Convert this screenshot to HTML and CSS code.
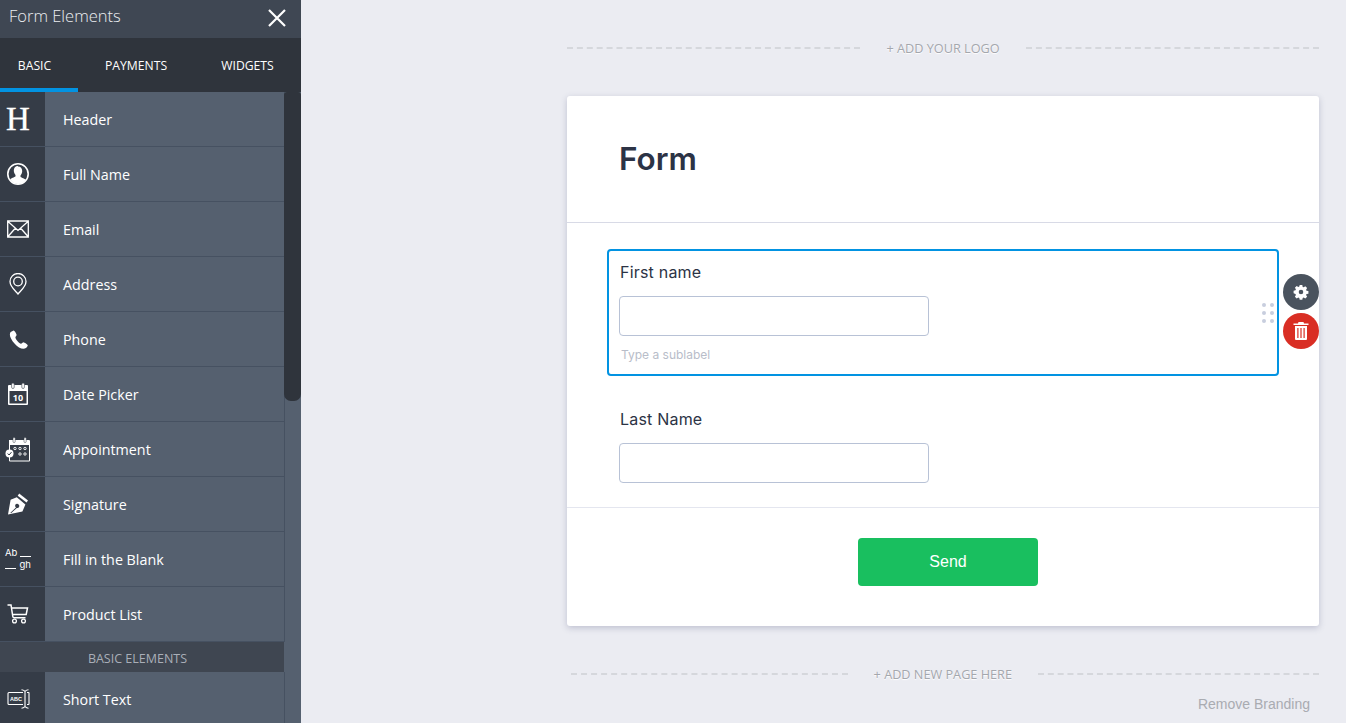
FILE: index.html
```html
<!DOCTYPE html>
<html lang="en">
<head>
    <meta charset="UTF-8">
    <title>Form Builder</title>
    <link rel="stylesheet" href="styles.css">
</head>
<body>
    <aside class="sidebar">
        <div class="sidebar-head">
            <span class="sidebar-title">Form Elements</span>
            <svg class="close-icon" width="20" height="20" viewBox="0 0 20 20"><path d="M2 2 L18 18 M18 2 L2 18" stroke="#fff" stroke-width="2.2" fill="none"/></svg>
        </div>
        <div class="tabs">
            <div class="tab tab-active">BASIC</div>
            <div class="tab tab-mid">PAYMENTS</div>
            <div class="tab tab-last">WIDGETS</div>
        </div>
        <div class="element-list">
            <div class="scroll-thumb"></div>
            <div class="element">
                <div class="element-icon"><span class="h-glyph">H</span></div>
                <div class="element-name">Header</div>
            </div>
            <div class="element">
                <div class="element-icon">
                    <svg width="24" height="24" viewBox="0 0 24 24"><circle cx="12" cy="12" r="10.200" fill="none" stroke="#fff" stroke-width="1.600"/><path d="M12 4.500c2.700 0 4.200 2 4.200 4.500 0 1.800-.8 3.400-1.700 4.400v1.300c0 .6 3.400 1.600 5.400 3A10 10 0 0 1 12 22a10 10 0 0 1-7.900-4.800c2-1.400 5.400-2.400 5.400-3v-1.300c-.9-1-1.700-2.600-1.700-4.400 0-2.500 1.500-4.500 4.200-4.500z" fill="#fff"/></svg>
                </div>
                <div class="element-name">Full Name</div>
            </div>
            <div class="element">
                <div class="element-icon">
                    <svg width="22" height="18" viewBox="0 0 22 18"><path d="M.7 1h20.600v16H.7z M1 1.500l10 9 10-9 M1 16.500l7.500-8.500 M21 16.500l-7.500-8.500" fill="none" stroke="#fff" stroke-width="1.300"/></svg>
                </div>
                <div class="element-name">Email</div>
            </div>
            <div class="element">
                <div class="element-icon">
                    <svg width="18" height="22" viewBox="0 0 18 22"><path d="M9 21C6 17.500 1 13.500 1 8.500a8 8 0 0 1 16 0C17 13.500 12 17.500 9 21z" fill="none" stroke="#fff" stroke-width="1.300"/><circle cx="9" cy="8.500" r="4.300" fill="none" stroke="#fff" stroke-width="1.300"/></svg>
                </div>
                <div class="element-name">Address</div>
            </div>
            <div class="element">
                <div class="element-icon">
                    <svg width="19" height="19" viewBox="0 0 19 19"><path d="M4.600.6 1.700 1.900C.6 3 .5 5.600 2 8.600c1.800 3.600 4.900 7 8 8.900 2.500 1.400 5.300 1.700 6.900.6 1-.7 1.700-2 1.900-2.900-.2-.8-3.300-2.800-4.300-3-.8 0-1.800 1.400-2.500 1.500-1.500.1-5.500-4.600-5.600-6.300 0-.8 1.200-1.500 1.200-2.300C7.600 4.100 5.800.9 4.600.6z" fill="#fff"/></svg>
                </div>
                <div class="element-name">Phone</div>
            </div>
            <div class="element">
                <div class="element-icon">
                    <svg width="22" height="22" viewBox="0 0 22 22"><path d="M2 2h18a1 1 0 0 1 1 1v18a1 1 0 0 1-1 1H2a1 1 0 0 1-1-1V3a1 1 0 0 1 1-1z" fill="#fff"/><rect x="2.500" y="8" width="17" height="12.500" fill="#353c47"/><rect x="4.600" y="0" width="2.600" height="5.500" rx="1.300" fill="#fff" stroke="#353c47" stroke-width=".6"/><rect x="14.800" y="0" width="2.600" height="5.500" rx="1.300" fill="#fff" stroke="#353c47" stroke-width=".6"/><text x="11" y="18.300" class="date-num">10</text></svg>
                </div>
                <div class="element-name">Date Picker</div>
            </div>
            <div class="element">
                <div class="element-icon">
                    <svg width="26" height="25" viewBox="0 0 26 25"><path d="M4 3h20a1 1 0 0 1 1 1v19.500a1 1 0 0 1-1 1H5a1 1 0 0 1-1-1z" fill="#fff"/><rect x="5" y="8" width="19" height="15.500" fill="#353c47"/><rect x="8" y="0.500" width="2.200" height="5" rx="1" fill="#fff" stroke="#353c47" stroke-width=".5"/><rect x="19" y="0.500" width="2.200" height="5" rx="1" fill="#fff" stroke="#353c47" stroke-width=".5"/><g fill="none" stroke="#fff" stroke-width=".9"><circle cx="10" cy="11.500" r="1.200"/><circle cx="15" cy="11.500" r="1.200"/><circle cx="20" cy="11.500" r="1.200"/><circle cx="15" cy="17" r="1.200"/><circle cx="20" cy="17" r="1.200"/></g><circle cx="4.500" cy="16.500" r="4" fill="#fff"/><path d="M2.700 16.500l1.400 1.500 2.400-2.900" stroke="#353c47" stroke-width="1" fill="none"/></svg>
                </div>
                <div class="element-name">Appointment</div>
            </div>
            <div class="element">
                <div class="element-icon">
                    <svg width="22" height="22" viewBox="0 0 22 22"><path d="M12.200.6l8.800 6.800-1.500 2.100-8.800-6.800z" fill="#fff"/><path fill-rule="evenodd" d="M9.800 4.200 3.600 6.800 1 21.400 15.400 18.600l3-7zM9 11a2.200 2.200 0 1 1 .8 4.100L4 20.300l-.6-.6L9 14.500A2.200 2.200 0 0 1 9 11z" fill="#fff"/></svg>
                </div>
                <div class="element-name">Signature</div>
            </div>
            <div class="element">
                <div class="element-icon">
                    <div class="fill-blank">
                        <div class="fill-row"><span>Ab</span><i></i></div>
                        <div class="fill-row"><i></i><span>gh</span></div>
                    </div>
                </div>
                <div class="element-name">Fill in the Blank</div>
            </div>
            <div class="element">
                <div class="element-icon">
                    <svg width="22" height="20" viewBox="0 0 22 20"><path d="M.5 1H4l1.800 11.500a1.500 1.500 0 0 0 1.500 1.300h11.200 M4.500 4H20.500l-1.300 6.500H5.500" fill="none" stroke="#fff" stroke-width="1.500"/><circle cx="7.500" cy="17" r="1.900" fill="none" stroke="#fff" stroke-width="1.300"/><circle cx="16.500" cy="17" r="1.900" fill="none" stroke="#fff" stroke-width="1.300"/></svg>
                </div>
                <div class="element-name">Product List</div>
            </div>
            <div class="element-group">BASIC ELEMENTS</div>
            <div class="element">
                <div class="element-icon">
                    <svg width="23" height="20" viewBox="0 0 23 20"><path d="M16 3.500H2a1 1 0 0 0-1 1v10a1 1 0 0 0 1 1h14 M20 3.500h1.500a.5.500 0 0 1 .5.500v11a.5.500 0 0 1-.5.500H20" fill="none" stroke="#fff" stroke-width="1.100"/><path d="M14.500.8c1.500 0 2.500.6 3.500 1.500 1-.9 2-1.500 3.500-1.500 M18 2.300v15.400 M14.500 19.200c1.500 0 2.500-.6 3.500-1.500 1 .9 2 1.500 3.500 1.500" fill="none" stroke="#fff" stroke-width="1.100"/><text x="9" y="11.700" class="abc-text">ABC</text></svg>
                </div>
                <div class="element-name">Short Text</div>
            </div>
        </div>
    </aside>

    <main class="canvas">
        <div class="add-row logo-row">
            <span class="dash"></span>
            <span class="add-text">+ ADD YOUR LOGO</span>
            <span class="dash"></span>
        </div>

        <div class="form-card">
            <div class="form-head">
                <h1>Form</h1>
            </div>
            <div class="form-body">
                <div class="field field-selected">
                    <label>First name</label>
                    <div class="text-input"></div>
                    <div class="sublabel">Type a sublabel</div>
                    <div class="drag-dots">
                        <span></span><span></span><span></span><span></span><span></span><span></span>
                    </div>
                    <div class="field-tools">
                        <div class="tool tool-gear">
                            <svg width="16" height="16" viewBox="0 0 16 16"><path fill="#fff" fill-rule="evenodd" d="M6.700 1h2.600l.4 1.900 1 .4 1.600-1 1.800 1.800-1 1.600.4 1 1.900.4v2.600l-1.900.4-.4 1 1 1.600-1.800 1.800-1.600-1-1 .4-.4 1.900H6.700l-.4-1.900-1-.4-1.600 1-1.800-1.800 1-1.600-.4-1L.6 9.300V6.700l1.900-.4.4-1-1-1.600 1.800-1.800 1.600 1 1-.4zM8 5.700a2.300 2.300 0 1 0 0 4.600 2.300 2.300 0 0 0 0-4.600z"/></svg>
                        </div>
                        <div class="tool tool-trash">
                            <svg width="16" height="18" viewBox="0 0 16 18"><path fill="#fff" fill-rule="evenodd" d="M5.500 0h5l.5 1.500h4.500V3H.5V1.500H5zM2 4h12v13a1 1 0 0 1-1 1H3a1 1 0 0 1-1-1zm2.300 2v10h1.200V6zm3.100 0v10h1.200V6zm3.100 0v10h1.200V6z"/></svg>
                        </div>
                    </div>
                </div>
                <div class="field">
                    <label>Last Name</label>
                    <div class="text-input"></div>
                </div>
            </div>
            <div class="form-foot">
                <button class="send-button">Send</button>
            </div>
        </div>

        <div class="add-row page-row">
            <span class="dash"></span>
            <span class="add-text">+ ADD NEW PAGE HERE</span>
            <span class="dash"></span>
        </div>

        <div class="branding">Remove Branding</div>
    </main>
</body>
</html>
```

FILE: styles.css
```css
html, body {
    height: 723px;
    overflow: hidden;
}
body {
    margin: 0;
    display: flex;
    background: #ebecf2;
    font-family: "Open Sans", sans-serif;
}
.sidebar {
    width: 301px;
    height: 723px;
    flex-shrink: 0;
    overflow: hidden;
    background: #55606f;
}
.sidebar-head {
    height: 38px;
    display: flex;
    justify-content: space-between;
    align-items: center;
    padding: 0 14px 8px 9px;
    box-sizing: border-box;
    background: #3f4753;
}
.sidebar-title {
    color: #eceef1;
    font-size: 16.500px;
    font-weight: 300;
}
.close-icon {
    margin-top: 6px;
}
.tabs {
    height: 54px;
    display: flex;
    background: #2f343c;
    color: #fff;
    font-size: 12.200px;
    font-weight: 500;
}
.tab {
    display: flex;
    align-items: center;
    justify-content: center;
    box-sizing: border-box;
}
.tab-active {
    width: 78px;
    padding-right: 9px;
    padding-top: 4px;
    border-bottom: 4px solid #0293e2;
}
.tab-mid {
    width: 116px;
}
.tab-last {
    width: 107px;
}
.element-list {
    position: relative;
}
.scroll-thumb {
    position: absolute;
    top: 0;
    right: 0;
    width: 17px;
    height: 309px;
    background: #2f343c;
    border-radius: 3px 3px 7px 7px;
}
.element {
    width: 285px;
    height: 55px;
    display: flex;
    box-sizing: border-box;
    border-right: 1px solid #465161;
    border-bottom: 1px solid #465161;
}
.element-icon {
    width: 45px;
    flex-shrink: 0;
    box-sizing: border-box;
    padding-right: 9px;
    display: flex;
    align-items: center;
    justify-content: center;
    background: #353c47;
}
.element-name {
    padding-left: 18px;
    color: #fff;
    font-size: 14.300px;
    line-height: 55px;
}
.element-group {
    width: 284px;
    height: 30px;
    box-sizing: border-box;
    padding-right: 9px;
    padding-top: 2px;
    background: #3f4651;
    color: #a9aeb8;
    font-size: 12.500px;
    line-height: 29px;
    text-align: center;
}
.h-glyph {
    color: #fff;
    font-family: "Liberation Serif", serif;
    font-size: 33px;
    line-height: 1;
    -webkit-text-stroke: 0.3px #fff;
}
.date-num {
    fill: #fff;
    font-family: "Open Sans", sans-serif;
    font-size: 9px;
    font-weight: 700;
    text-anchor: middle;
}
.abc-text {
    fill: #fff;
    font-family: "Liberation Sans", sans-serif;
    font-size: 5.500px;
    font-weight: 700;
    text-anchor: middle;
}
.fill-blank {
    flex-shrink: 0;
    width: 26px;
    color: #fff;
    font-family: "Inter", sans-serif;
    font-size: 9.500px;
    line-height: 12px;
}
.fill-row {
    display: flex;
    align-items: flex-end;
    justify-content: space-between;
}
.fill-row i {
    width: 11px;
    height: 1.500px;
    margin-bottom: 2px;
    background: #fff;
}
.canvas {
    flex: 1;
    padding: 0 27px 0 266px;
}
.add-row {
    display: flex;
    align-items: center;
    gap: 26px;
    color: #a4a7ad;
    font-size: 12.700px;
    text-shadow: 0 1px 1px #fff;
}
.logo-row {
    height: 96px;
    box-sizing: border-box;
}
.page-row {
    margin-top: 38px;
    height: 20px;
    padding-left: 4px;
}
.page-row .dash:last-child {
    flex: 0 0 281px;
}
.dash {
    flex: 1;
    border-top: 2px dashed #d5d7dc;
}
.add-text {
    white-space: nowrap;
}
.form-card {
    background: #fff;
    border-radius: 3px;
    box-shadow: 0 2px 6px rgba(60, 65, 110, 0.25);
}
.form-head {
    height: 127px;
    box-sizing: border-box;
    padding: 41px 52px 0;
    border-bottom: 1px solid #d8dae6;
}
.form-head h1 {
    margin: 0;
    color: #2c3345;
    font-family: "Inter", sans-serif;
    font-size: 31.500px;
    font-weight: 600;
    line-height: 44px;
}
.form-body {
    padding: 26px 40px 0;
    height: 285px;
    box-sizing: border-box;
    border-bottom: 1px solid #e4e6ef;
}
.field {
    position: relative;
    padding: 12px 12px 0;
}
.field-selected {
    height: 127px;
    box-sizing: border-box;
    margin-bottom: 21px;
    padding: 11px 10px 0;
    border: 2px solid #0293e2;
    border-radius: 4px;
}
.field label {
    display: block;
    padding-left: 1px;
    color: #2c3345;
    font-family: "Inter", sans-serif;
    font-size: 16px;
    letter-spacing: 0.2px;
    line-height: 20px;
    margin-bottom: 14px;
}
.text-input {
    width: 310px;
    height: 40px;
    box-sizing: border-box;
    background: #fff;
    border: 1px solid #b8c2d6;
    border-radius: 4px;
}
.sublabel {
    margin-top: 11px;
    padding-left: 2px;
    color: #b8bdc9;
    font-family: "Inter", sans-serif;
    font-size: 12px;
    line-height: 16px;
}
.drag-dots {
    position: absolute;
    right: 3px;
    top: 52px;
    display: grid;
    grid-template-columns: 4px 4px;
    gap: 4px;
}
.drag-dots span {
    width: 4px;
    height: 4px;
    border-radius: 50%;
    background: #c8cede;
}
.field-tools {
    position: absolute;
    top: 23px;
    left: 100%;
    margin-left: 6px;
    display: flex;
    flex-direction: column;
    gap: 3px;
}
.tool {
    width: 36px;
    height: 36px;
    border-radius: 50%;
    display: flex;
    align-items: center;
    justify-content: center;
}
.tool-gear {
    background: #4a535e;
}
.tool-trash {
    background: #d92e24;
}
.form-foot {
    height: 118px;
    display: flex;
    justify-content: center;
    padding: 30px 0 0 10px;
    box-sizing: border-box;
}
.send-button {
    width: 180px;
    height: 48px;
    border: none;
    border-radius: 4px;
    background: #19bf5f;
    color: #fff;
    font-family: "Liberation Sans", sans-serif;
    font-size: 16px;
}
.branding {
    margin-top: 10px;
    padding-right: 9px;
    color: #a9abb1;
    font-family: "Liberation Sans", sans-serif;
    font-size: 14px;
    line-height: 20px;
    text-align: right;
}
```
